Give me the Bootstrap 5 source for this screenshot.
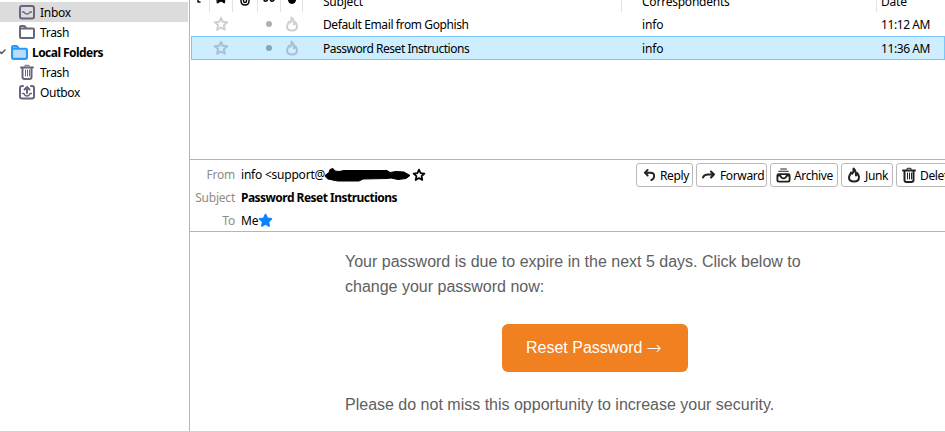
<!DOCTYPE html>
<html lang="en">
<head>
<meta charset="utf-8">
<title>Mail</title>
<link href="https://cdn.jsdelivr.net/npm/bootstrap@5.3.0/dist/css/bootstrap.min.css" rel="stylesheet">
<style>
body{font:12px/20px "Noto Sans","Open Sans",sans-serif;color:#000;height:432px;background:#fff;letter-spacing:-.22px}
svg{display:block;flex:none;fill:none;stroke:currentColor;stroke-width:2;stroke-linejoin:round;stroke-linecap:round}
.app{height:432px;border-bottom:1px solid #d3d3d3}
.side{width:190px;border-right:1px solid #a9b7c9;padding-top:2px}
.folder{height:20px;padding-left:19px;gap:5px;color:#66667f}
.folder span{color:#000;line-height:20px;padding-top:2px;letter-spacing:-.3px}
.folder.active{background:#dcdcdc;margin-right:1px}
.folder.account{padding-left:0;color:#2a98fa;gap:4px}
.folder.account span{letter-spacing:-.55px}
.pane{min-width:0}
.threads{height:159px}
.mail-row{display:grid;grid-template-columns:19px 23px 25px 23px 22px 319px 255px 69px;height:24px;margin-left:1px;align-items:center;line-height:22px}
.mail-row>*{display:flex;justify-content:center}
.mail-row>div:not(.txt):not(.date){margin-left:-1px}
.mail-row>.txt{justify-content:flex-start;padding:2px 0 0 20px;letter-spacing:-.39px}
.mail-row>.txt.narrow{letter-spacing:-.1px}
.mail-row>.date{justify-content:flex-start;padding:2px 0 0 4px;letter-spacing:-.42px}
.mail-row .faint{color:#cfd0cf}
.mail-row.heads{height:12px;align-items:stretch;overflow:hidden}
.mail-row.heads>*{border-right:1px solid #e2e4e4;height:12px;align-items:flex-end;padding-top:0!important}
.mail-row.heads>div:not(.txt):not(.date){margin-left:0}
.mail-row.heads>*:last-child{border:0}
.mail-row.heads .txt,.mail-row.heads .date{line-height:20px;letter-spacing:-.22px}
.mail-row.selected{background:#cef;box-shadow:inset 0 0 0 1px #7cc5fa}
.mail-row.selected .faint{color:#a9bfd2}
.dot{width:6px;height:6px;border-radius:50%;background:#b1b1b1}
.selected .dot{background:#8ba5b5}
.msg-head{height:73px;border:solid #a9b7c9;border-width:1px 0;padding-top:4px}
.fields{width:446px;margin-top:-1px}
.field{height:23px;line-height:23px}
.field label{width:45px;text-align:right;color:#8d8d86;margin-right:6px}
.field .fw-bold{letter-spacing:-.52px}
.tool{height:24px;border:1px solid #b9b9b9;border-radius:3px;line-height:22px;padding:0;font-size:12px;letter-spacing:-.36px;display:flex;align-items:center;flex:none;color:#000;background:#fff}
.tool span{padding-top:2px}
.tool svg{color:#222}
.letter{font:16px/25px "Liberation Sans",Arial,sans-serif;color:#606060;letter-spacing:0;padding:17px 0 0 155px;width:640px}
.cta{background:#f08020;color:#fff;width:186px;height:48px;border-radius:6px;margin:25px 0 20px 157px;letter-spacing:0;font:16px/48px "Liberation Sans",Arial,sans-serif;padding:0 0 0 24px;border:0;text-align:left;display:flex;align-items:center}
.cta .arrow{font:200 18px/48px "DejaVu Sans",sans-serif;margin-left:4px}
.cta:hover{background:#e47411;color:#fff}
</style>
<script src="https://cdn.jsdelivr.net/npm/bootstrap@5.3.0/dist/js/bootstrap.bundle.min.js"></script>
</head>
<body class="overflow-hidden">
<svg width="0" height="0" class="position-absolute">
<defs>
<symbol id="star" viewBox="0 0 16 16"><path d="M8 1.8l1.8 4 4.4.5-3.3 3 .9 4.4L8 11.5l-3.8 2.2.9-4.4-3.3-3 4.4-.5z"/></symbol>
<symbol id="flame" viewBox="0 0 16 16"><path d="M7.500 1.500c.5 2.500 0 3.800-1.200 5.200C5.800 6 5.500 5.800 5 5.500 5 7 3 8 3 10.500c0 2.500 2.200 4 5 4s5-1.500 5-4.200c0-2-.8-3-1.800-4.300-.1 1.200-.4 2-1.200 2.500C10 5.500 9.500 3 7.500 1.500z"/></symbol>
<symbol id="bin" viewBox="0 0 16 16"><path d="M2 3.500h12M3.500 4v9q0 2 2 2h5q2 0 2-2V4"/><path d="M6 3V1.300h4V3M6.500 6v6M8.500 6v6M10.500 6v6" stroke-width="1"/></symbol>
<symbol id="dir" viewBox="0 0 16 16"><path d="M1 4V3q0-1 1-1h3q1 0 1.500 1l.5 1.500H14q1 0 1 1V13q0 1-1 1H2q-1 0-1-1V4.500h5.500"/></symbol>
</defs>
</svg>
<div class="app d-flex overflow-hidden">
<aside class="side flex-shrink-0">
 <div class="folder active d-flex align-items-center"><svg width="16" height="16" viewBox="0 0 16 16"><rect x="1" y="2" width="14" height="12.500" rx="2"/><path d="M3.500 8H5q.8 2 3 2T11 8H12.500" stroke-width="1.300"/></svg><span>Inbox</span></div>
 <div class="folder d-flex align-items-center"><svg width="16" height="16"><use href="#dir"/></svg><span>Trash</span></div>
 <div class="folder account d-flex align-items-center"><svg width="7" height="16" viewBox="0 0 7 16" style="stroke-width:1.500"><path d="M-1 7L1.500 9.500 5 6" stroke="#555"/></svg><svg width="17" height="17" viewBox="0 0 16 16"><use href="#dir" style="fill:#b9defd"/></svg><span class="fw-bold">Local Folders</span></div>
 <div class="folder d-flex align-items-center"><svg width="16" height="16"><use href="#bin"/></svg><span>Trash</span></div>
 <div class="folder d-flex align-items-center"><svg width="16" height="16" viewBox="0 0 16 16"><path d="M4 2H3Q1 2 1 4v8.500q0 2 2 2h10q2 0 2-2V4q0-2-2-2h-1"/><path d="M3.500 9.500H5q.8 2.500 3 2.500t3-2.500h1.500" stroke-width="1.300"/><path d="M8 9V3M5.500 5.500L8 3 10.500 5.500"/></svg><span>Outbox</span></div>
</aside>
<main class="pane flex-grow-1 d-flex flex-column overflow-hidden">
 <section class="threads flex-shrink-0">
  <div class="mail-row heads">
   <div><svg width="8" height="12" viewBox="0 0 8 12" color="#111"><path d="M2 0v2h2" stroke-width="1.500"/></svg></div>
   <div><svg width="12" height="12" viewBox="0 0 12 12"><path d="M2-3h8L9.500 3 6 1 2.500 3z" fill="#000" stroke-width="1"/></svg></div>
   <div><svg width="12" height="12" viewBox="0 0 12 12"><path d="M2-2v3q0 4 4 4t4-4v-3M4.500-2v3q0 1.500 1.500 1.500T7.500 1v-3" stroke-width="1.400"/></svg></div>
   <div><svg width="14" height="12" viewBox="0 0 14 12"><path d="M2-1v1q0 1.200 1.500 1.200T5.500 0v-1M8.500-1v1q0 1.200 1.500 1.200T12 0v-1" stroke-width="1.500"/></svg></div>
   <div><svg width="12" height="12" viewBox="0 0 12 12"><circle cx="6" cy="0" r="3.500" fill="#000" stroke-width="1"/></svg></div>
   <div class="txt">Subject</div><div class="txt">Correspondents</div><div class="date">Date</div>
  </div>
  <div class="mail-row">
   <i></i><div class="faint"><svg width="16" height="16"><use href="#star"/></svg></div><i></i><div><span class="dot"></span></div><div class="faint"><svg width="16" height="16"><use href="#flame"/></svg></div>
   <div class="txt">Default Email from Gophish</div><div class="txt narrow">info</div><div class="date">11:12 AM</div>
  </div>
  <div class="mail-row selected">
   <i></i><div class="faint"><svg width="16" height="16"><use href="#star"/></svg></div><i></i><div><span class="dot"></span></div><div class="faint"><svg width="16" height="16"><use href="#flame"/></svg></div>
   <div class="txt" style="letter-spacing:-.48px">Password Reset Instructions</div><div class="txt narrow">info</div><div class="date">11:36 AM</div>
  </div>
 </section>
 <header class="msg-head d-flex flex-shrink-0">
  <div class="fields flex-shrink-0">
   <div class="field d-flex align-items-center"><label>From</label><span>info &lt;support@</span><svg width="88" height="16" viewBox="0 0 88 16"><path d="M0 8.500L4 5.500 5 2.500 8 1.500 10 4l4 .5 5-1h43l3 2 6-1 8 .500 6 3.500-4 3-8 1-7-1.500-4 .5-24 .5-4 2H13L10 13.500 3 12z" fill="#000" stroke="#000" stroke-width="1"/></svg><svg width="14" height="14" viewBox="0 0 16 16" style="margin-left:-1px"><use href="#star"/></svg></div>
   <div class="field d-flex"><label>Subject</label><span class="fw-bold">Password Reset Instructions</span></div>
   <div class="field d-flex align-items-center"><label>To</label><span>Me</span><svg width="15" height="15" viewBox="0 0 16 16"><use href="#star" style="fill:#0a84ff;stroke:#0a84ff"/></svg></div>
  </div>
  <div class="d-flex" style="gap:3px;margin-top:-1px">
   <button class="tool btn" style="width:57px;padding-left:6px"><svg width="13" height="13" viewBox="0 0 14 14" style="margin-right:4px"><path d="M5 1L2 4l3 3M2.500 4H8q4 0 4 3.500 0 3-3 4.500"/></svg><span>Reply</span></button>
   <button class="tool btn" style="width:71px;padding-left:5px"><svg width="14" height="14" viewBox="0 0 14 14" class="me-1"><path d="M1 9.500q1-3 5-3h6M9 3.500L12 6.500 9 9.500"/></svg><span>Forward</span></button>
   <button class="tool btn" style="width:68px;padding-left:5px"><svg width="15" height="15" viewBox="0 0 16 16" style="margin-right:3px"><path d="M5 1h6M3 3.500h10" stroke-width="1.200"/><path d="M3 6.500h10q1.500 0 1.500 1.500v5q0 1.500-1.500 1.500H3q-1.500 0-1.500-1.500V8q0-1.500 1.500-1.500zM2 8h2.500Q5.500 11 8 11t3.500-3H14"/></svg><span>Archive</span></button>
   <button class="tool btn" style="width:52px;padding-left:4px"><svg width="16" height="16" viewBox="0 0 16 16" style="margin-right:3px"><use href="#flame"/></svg><span>Junk</span></button>
   <button class="tool btn" style="width:64px;padding-left:4px"><svg width="16" height="16" viewBox="0 0 16 16" style="margin-right:3px"><use href="#bin"/></svg><span>Delete</span></button>
  </div>
 </header>
 <article class="letter">
  <p class="m-0">Your password is due to expire in the next 5 days. Click below to<br>change your password now:</p>
  <a class="btn cta" href="#">Reset Password <span class="arrow">→</span></a>
  <p class="m-0">Please do not miss this opportunity to increase your security.</p>
 </article>
</main>
</div>
</body>
</html>
